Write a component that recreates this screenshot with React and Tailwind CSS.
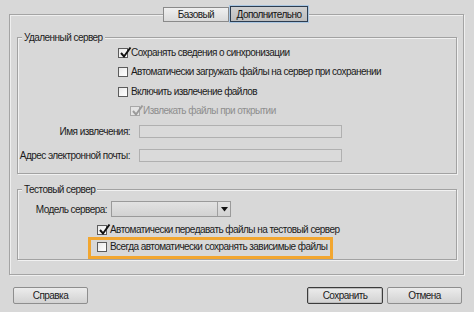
import React from "react";

const font = { fontFamily: '"Liberation Sans", Arial, sans-serif' };
const T = "text-[10px] tracking-[-0.55px]";

function Check({ checked, disabled }) {
  return (
    <span
      className={
        "relative inline-block w-[10px] h-[10px] shrink-0 border " +
        (disabled
          ? "border-[#a8a8a8] bg-[#e4e4e4]"
          : "border-[#5c5c5c] bg-gradient-to-br from-[#e9e9e9] to-[#ffffff]")
      }
    >
      {checked && (
        <svg
          className="absolute left-[0px] top-[-3px]"
          width="13"
          height="13"
          viewBox="0 0 13 13"
        >
          <path
            d="M2 7 L5 10.5 L11.5 1.5"
            fill="none"
            stroke={disabled ? "#9a9a9a" : "#111"}
            strokeWidth="2"
          />
        </svg>
      )}
    </span>
  );
}

function Row({ indent, checked, disabled, children, h }) {
  return (
    <div className={"flex items-center " + h} style={{ paddingLeft: indent }}>
      <Check checked={checked} disabled={disabled} />
      <span
        className={
          "ml-[3px] text-[10px] tracking-[-0.55px] leading-none whitespace-nowrap " +
          (disabled ? "text-[#8e8e8e]" : "text-[#1b1b1b]")
        }
      >
        {children}
      </span>
    </div>
  );
}

function Group({ title, className, children }) {
  return (
    <div
      className={
        "relative ml-[7px] w-[440px] border border-[#a2a2a2] shadow-[inset_1px_1px_0_#f1f1f1,1px_1px_0_#f1f1f1] " +
        className
      }
    >
      <span className="absolute left-[4px] top-[-7px] bg-[#d8d8d8] px-[2px] text-[10px] tracking-[-0.55px] leading-[13px] text-[#1b1b1b]">
        {title}
      </span>
      {children}
    </div>
  );
}

function Button({ children, def, className }) {
  return (
    <div
      className={
        "h-[17px] flex items-center justify-center text-[10px] tracking-[-0.55px] text-[#1b1b1b] rounded-[2px] bg-gradient-to-b from-[#ececec] to-[#d2d2d2] " +
        (def
          ? "border border-[#3c3c3c] shadow-[inset_0_0_0_1px_#bdbdbd]"
          : "border border-[#8e8e8e]") +
        " " +
        className
      }
    >
      {children}
    </div>
  );
}

export default function App() {
  return (
    <div
      className="w-[474px] h-[312px] bg-[#d8d8d8] pt-[14px] pl-[9px] overflow-hidden"
      style={font}
    >
      <div className="relative w-[455px] h-[261px] border border-[#a4a4a4] shadow-[inset_1px_1px_0_#efefef,1px_1px_0_#efefef] pt-[22px]">
        {/* tabs */}
        <div className="absolute left-[153px] top-[-8px] flex gap-[1px]">
          <div className="w-[66px] h-[15px] flex items-center justify-center border border-[#8a8a8a] bg-gradient-to-b from-[#f0f0f0] to-[#dadada] text-[10px] tracking-[-0.55px] text-[#1b1b1b]">
            Базовый
          </div>
          <div className="w-[78px] h-[16px] -mt-[1px] flex items-center justify-center border border-[#2d3d50] shadow-[0_0_0_1px_#a9c6e2] bg-gradient-to-b from-[#d0d0d0] to-[#bdbdbd] text-[10px] tracking-[-0.55px] text-[#111]">
            Дополнительно
          </div>
        </div>

        <Group title="Удаленный сервер" className="h-[137px] pt-[5px]">
          <Row indent={100} checked h="h-[19px]">
            Сохранять сведения о синхронизации
          </Row>
          <Row indent={100} h="h-[20px]">
            Автоматически загружать файлы на сервер при сохранении
          </Row>
          <Row indent={100} h="h-[19px]">
            Включить извлечение файлов
          </Row>
          <Row indent={112} checked disabled h="h-[19px]">
            Извлекать файлы при открытии
          </Row>
          <div className="mt-[5px] flex items-center h-[13px]">
            <span className={"w-[112px] text-right text-[#1b1b1b] whitespace-nowrap " + T}>
              Имя извлечения:
            </span>
            <div className="ml-[9px] w-[203px] h-[13px] border border-[#b0b0b0] bg-[#dadada]" />
          </div>
          <div className="mt-[11px] flex items-center h-[13px]">
            <span className={"w-[112px] text-right text-[#1b1b1b] whitespace-nowrap " + T}>
              Адрес электронной почты:
            </span>
            <div className="ml-[9px] w-[203px] h-[13px] border border-[#b0b0b0] bg-[#dadada]" />
          </div>
        </Group>

        <Group title="Тестовый сервер" className="mt-[15px] h-[71px] pt-[11px]">
          <div className="flex items-center h-[16px]">
            <span className={"w-[89px] text-right text-[#1b1b1b] whitespace-nowrap " + T}>
              Модель сервера:
            </span>
            <div className="ml-[4px] w-[120px] h-[16px] flex border border-[#9a9a9a] bg-gradient-to-b from-[#e2e2e2] to-[#d2d2d2]">
              <div className="flex-1" />
              <div className="w-[13px] border-l border-[#a0a0a0] flex items-center justify-center">
                <svg width="7" height="5" viewBox="0 0 7 5">
                  <path d="M0 0 H7 L3.5 4.5 Z" fill="#111" />
                </svg>
              </div>
            </div>
          </div>
          <div className="mt-[3px]">
            <Row indent={79} checked h="h-[19px]">
              Автоматически передавать файлы на тестовый сервер
            </Row>
          </div>
          <div className="relative">
            <div className="absolute left-[70px] top-[-2px] w-[245px] h-[22px] border-[3px] border-[#f2a62f]" />
            <Row indent={79} h="h-[16px]">
              Всегда автоматически сохранять зависимые файлы
            </Row>
          </div>
        </Group>
      </div>

      <div className="mt-[12px] flex w-[453px] pl-[4px]">
        <Button className="w-[75px]">Справка</Button>
        <div className="flex-1" />
        <Button def className="w-[76px]">
          Сохранить
        </Button>
        <Button className="ml-[4px] w-[75px]">Отмена</Button>
      </div>
    </div>
  );
}
